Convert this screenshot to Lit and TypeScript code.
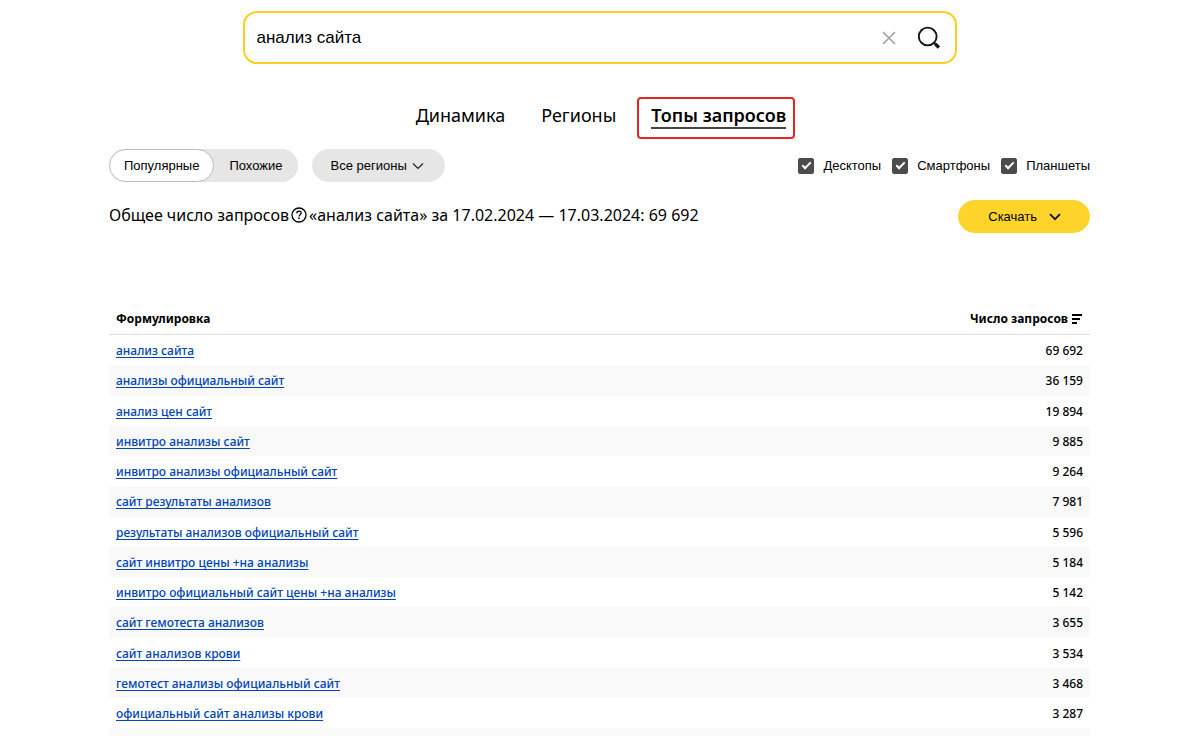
import { LitElement, html, css } from "lit";
import { customElement, state } from "lit/decorators.js";

interface Row {
  phrase: string;
  count: string;
}

const ROWS: Row[] = [
  { phrase: "анализ сайта", count: "69 692" },
  { phrase: "анализы официальный сайт", count: "36 159" },
  { phrase: "анализ цен сайт", count: "19 894" },
  { phrase: "инвитро анализы сайт", count: "9 885" },
  { phrase: "инвитро анализы официальный сайт", count: "9 264" },
  { phrase: "сайт результаты анализов", count: "7 981" },
  { phrase: "результаты анализов официальный сайт", count: "5 596" },
  { phrase: "сайт инвитро цены +на анализы", count: "5 184" },
  { phrase: "инвитро официальный сайт цены +на анализы", count: "5 142" },
  { phrase: "сайт гемотеста анализов", count: "3 655" },
  { phrase: "сайт анализов крови", count: "3 534" },
  { phrase: "гемотест анализы официальный сайт", count: "3 468" },
  { phrase: "официальный сайт анализы крови", count: "3 287" },
];

const DEVICES = ["Десктопы", "Смартфоны", "Планшеты"];

@customElement("search-box")
class SearchBox extends LitElement {
  static styles = css`
    :host {
      display: block;
    }
    .box {
      display: flex;
      align-items: center;
      box-sizing: border-box;
      height: 53px;
      padding: 0 14px 0 12px;
      border: 2px solid #fcd01c;
      border-radius: 14px;
      background: #fff;
    }
    .query {
      flex: 1;
      min-width: 0;
      padding: 0;
      border: 0;
      outline: 0;
      background: none;
      color: #000;
      font: 17px/24px "Liberation Sans", Arial, sans-serif;
    }
    .icon {
      display: flex;
      padding: 0;
      border: 0;
      background: none;
      cursor: pointer;
    }
    .find {
      margin-left: 21px;
    }
  `;

  render() {
    return html`
      <form class="box" role="search" @submit=${(e: Event) => e.preventDefault()}>
        <input class="query" type="text" aria-label="Запрос" value="анализ сайта" />
        <button class="icon" type="button" aria-label="Очистить">
          <svg width="14" height="14" viewBox="0 0 14 14" fill="none" stroke="#a3a3a3" stroke-width="1.7">
            <path d="M1 1l12 12M13 1L1 13" />
          </svg>
        </button>
        <button class="icon find" type="submit" aria-label="Найти">
          <svg width="24" height="24" viewBox="0 0 24 24" fill="none" stroke="#151515">
            <circle cx="10.7" cy="10.5" r="8.9" stroke-width="1.9" />
            <path d="M16.8 16.5l2 2" stroke-width="2" />
            <path d="M18.2 17.8l3.7 3.7" stroke-width="3.3" />
          </svg>
        </button>
      </form>
    `;
  }
}

@customElement("top-table")
class TopTable extends LitElement {
  static styles = css`
    :host {
      display: block;
    }
    .table {
      width: 100%;
      border-spacing: 0;
      font: 500 12px/20px "Noto Sans", sans-serif;
      color: #000;
    }
    .head {
      padding: 5px 7px;
      border-bottom: 1px solid #ddd;
      font-weight: 700;
      text-align: left;
    }
    .cell {
      height: 20px;
      padding: 6px 7px 4px;
    }
    .row:nth-child(even) .cell {
      background: #f9f9f9;
    }
    .row:nth-child(4n + 2) .cell {
      border-bottom: 1px solid #f9f9f9;
    }
    .num {
      text-align: right;
      white-space: nowrap;
    }
    .sort {
      display: inline-flex;
      align-items: center;
      gap: 4px;
      padding: 0;
      border: 0;
      background: none;
      font: inherit;
      color: inherit;
    }
    .link {
      color: #0044bb;
      text-decoration: underline;
      text-underline-offset: 2px;
      text-decoration-skip-ink: none;
    }
  `;

  render() {
    return html`
      <table class="table">
        <thead>
          <tr>
            <th class="head" scope="col">Формулировка</th>
            <th class="head num" scope="col">
              <button class="sort" type="button">
                Число запросов
                <svg width="11" height="10" viewBox="0 0 11 10" fill="none" stroke="#000" stroke-width="1.8">
                  <path d="M0 1h10M0 5h8M0 9h5" />
                </svg>
              </button>
            </th>
          </tr>
        </thead>
        <tbody>
          ${ROWS.map(
            (r) => html`<tr class="row">
              <td class="cell"><a class="link" href="#">${r.phrase}</a></td>
              <td class="cell num">${r.count}</td>
            </tr>`
          )}
          <tr class="row"><td class="cell" colspan="2"></td></tr>
        </tbody>
      </table>
    `;
  }
}

@customElement("app-root")
class AppRoot extends LitElement {
  @state() private mode = 0;

  static styles = css`
    :host {
      display: block;
      box-sizing: border-box;
      height: 100vh;
      overflow: hidden;
      padding: 11px 110px 0 109px;
      background: #fff;
      color: #000;
      font-family: "Noto Sans", sans-serif;
    }
    .search {
      max-width: 714px;
      margin: 0 auto;
    }
    .tabs {
      display: flex;
      justify-content: center;
      align-items: baseline;
      gap: 36px;
      margin: 33px 0 10px;
      padding-left: 12px;
      font-size: 18px;
      line-height: 24px;
    }
    .tab {
      color: #000;
      text-decoration: none;
    }
    .marked {
      display: flex;
      margin-left: -15px;
      padding: 4px 7px 8px 12px;
      border: 2px solid #e52620;
      border-radius: 4px;
    }
    .current {
      border-bottom: 2px solid #444;
      font-weight: 600;
    }
    .bar {
      display: flex;
      align-items: center;
      font: 13px/16px "Liberation Sans", Arial, sans-serif;
    }
    .pill {
      box-sizing: border-box;
      height: 33px;
      border: 1px solid #e6e6e6;
      border-radius: 17px;
      background: #e6e6e6;
      color: #000;
      font: inherit;
      white-space: nowrap;
    }
    .modes {
      display: flex;
      border-radius: 17px;
      background: #e6e6e6;
    }
    .mode {
      padding: 0 14px;
    }
    .active {
      border-color: #bbb;
      background: #fff;
    }
    .regions {
      display: flex;
      align-items: center;
      gap: 5px;
      margin-left: 14px;
      padding: 0 20px 0 18px;
    }
    .devices {
      display: flex;
      gap: 11px;
      margin-left: auto;
    }
    .device {
      display: flex;
      align-items: center;
      gap: 9px;
    }
    .check {
      appearance: none;
      display: grid;
      place-items: center;
      width: 16px;
      height: 16px;
      margin: 0;
      border-radius: 3px;
      background: #fff;
      box-shadow: inset 0 0 0 1px #4c4c4c;
    }
    .check:checked {
      background: #4c4c4c;
    }
    .check:checked::before {
      content: "";
      width: 7px;
      height: 3px;
      margin-bottom: 3px;
      border-left: 2px solid #fff;
      border-bottom: 2px solid #fff;
      transform: rotate(-45deg);
    }
    .summary {
      display: flex;
      align-items: center;
      justify-content: space-between;
      margin: 18px 0 71px;
    }
    .total {
      display: flex;
      align-items: center;
      gap: 2px;
      margin: 0 0 4px;
      font-size: 16px;
      line-height: 24px;
      font-weight: 400;
    }
    .download {
      display: flex;
      align-items: center;
      gap: 12px;
      padding: 0 28px 0 29px;
      border-color: #fed42b;
      background: #fed42b;
      font: 13px/16px "Liberation Sans", Arial, sans-serif;
    }
  `;

  render() {
    return html`
      <search-box class="search"></search-box>
      <nav class="tabs">
        <a class="tab" href="#">Динамика</a>
        <a class="tab" href="#">Регионы</a>
        <div class="marked"><a class="tab current" href="#" aria-current="page">Топы запросов</a></div>
      </nav>
      <div class="bar">
        <div class="modes">
          ${["Популярные", "Похожие"].map(
            (name, i) => html`<button
              class="pill mode ${this.mode === i ? "active" : ""}"
              type="button"
              @click=${() => (this.mode = i)}
            >${name}</button>`
          )}
        </div>
        <button class="pill regions" type="button">
          Все регионы
          <svg width="12" height="8" viewBox="0 0 12 8" fill="none" stroke="#222" stroke-width="1.2">
            <path d="M1 1.5l5 5 5-5" />
          </svg>
        </button>
        <div class="devices">
          ${DEVICES.map(
            (d) => html`<label class="device"><input class="check" type="checkbox" checked />${d}</label>`
          )}
        </div>
      </div>
      <div class="summary">
        <h1 class="total">
          <span>Общее число запросов</span>
          <svg width="16" height="16" viewBox="0 0 16 16" fill="none" stroke="#000" stroke-width="1.3">
            <circle cx="8" cy="8" r="7" />
            <path d="M5.8 6.3c0-1.4 1-2.2 2.2-2.2s2.2.8 2.2 2c0 1.5-2.2 1.7-2.2 3.4" />
            <path d="M8 10.6v1.5" stroke-width="1.5" />
          </svg>
          <span>«анализ сайта» за 17.02.2024 — 17.03.2024: 69 692</span>
        </h1>
        <button class="pill download" type="button">
          Скачать
          <svg width="12" height="8" viewBox="0 0 12 8" fill="none" stroke="#111" stroke-width="1.8">
            <path d="M1 1.2l5 5 5-5" />
          </svg>
        </button>
      </div>
      <top-table></top-table>
    `;
  }
}
